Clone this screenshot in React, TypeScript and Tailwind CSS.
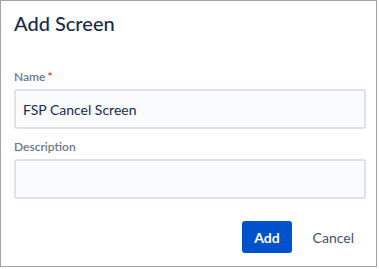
export default function App() {
  return (
    <div className="h-[269px] w-[379px] bg-white" style={{ fontFamily: 'Lato, "Noto Sans", sans-serif' }}>
      <div className="flex h-[267px] w-[377px] flex-col border border-[#a3a3a3] pl-[13px] pr-[11px]">
        <h1 className="mt-[10px] text-[20px] font-medium leading-[24px] text-[#172b4d]">Add Screen</h1>

        <label className="mt-[34px] block text-[12px] font-semibold leading-[16px] text-[#6b778c]">
          Name<span className="ml-[2px] text-[#de350b]">*</span>
        </label>
        <div className="mt-[4px] flex h-[40px] w-[352px] items-center rounded-[3px] border-2 border-[#dfe1e6] bg-[#fafbfc] px-[7px] text-[14px] text-[#172b4d]">
          FSP Cancel Screen
        </div>

        <label className="mt-[10px] block text-[12px] font-semibold leading-[16px] text-[#6b778c]">Description</label>
        <div className="mt-[4px] h-[40px] w-[352px] rounded-[3px] border-2 border-[#dfe1e6] bg-[#fafbfc]"></div>

        <div className="mt-[22px] flex w-[352px] justify-end gap-[9px]">
          <button className="h-[32px] rounded-[3px] bg-[#0052cc] px-[12px] text-[14px] font-bold text-white">Add</button>
          <button className="h-[32px] rounded-[3px] px-[12px] text-[14px] text-[#42526e]">Cancel</button>
        </div>
      </div>
    </div>
  );
}
